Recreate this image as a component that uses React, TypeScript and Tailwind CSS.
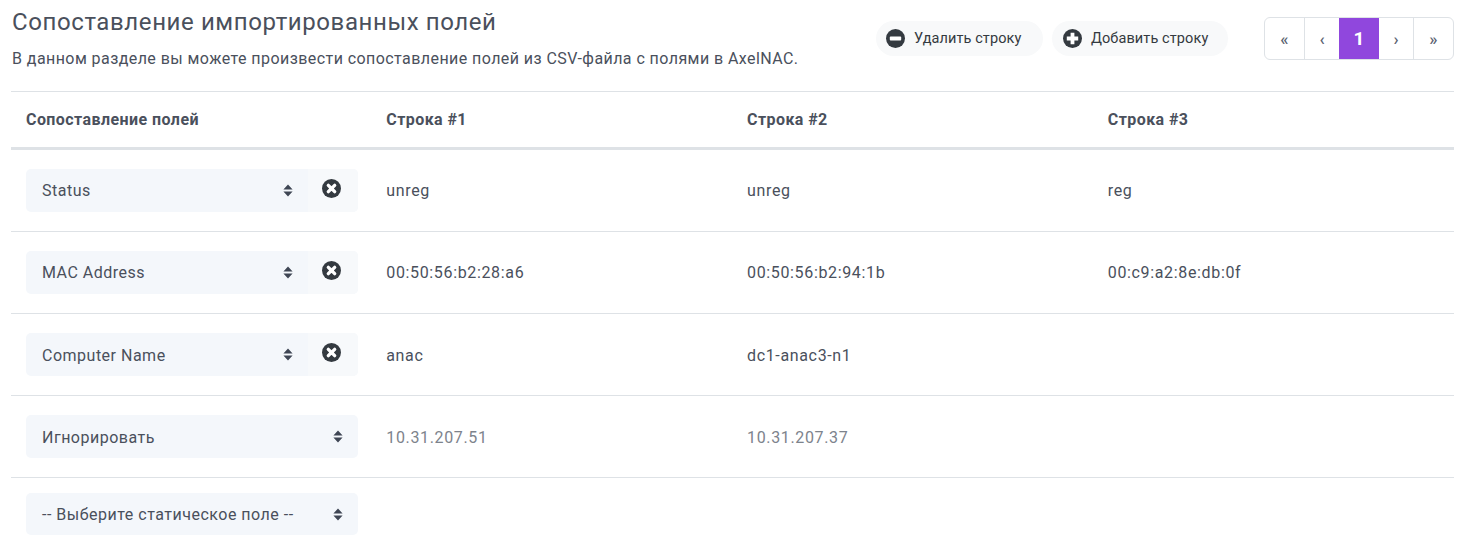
import { Fragment } from 'react';

const rows = [
  { field: 'Status', removable: true, cells: ['unreg', 'unreg', 'reg'] },
  { field: 'MAC Address', removable: true, cells: ['00:50:56:b2:28:a6', '00:50:56:b2:94:1b', '00:c9:a2:8e:db:0f'] },
  { field: 'Computer Name', removable: true, low: true, cells: ['anac', 'dc1-anac3-n1', ''] },
  { field: 'Игнорировать', removable: false, muted: true, low: true, cells: ['10.31.207.51', '10.31.207.37', ''] },
];

function Sort() {
  return (
    <svg width="10" height="13" viewBox="0 0 10 13" className="shrink-0 text-[#3f4654]">
      <path d="M5 0.5 9.6 5.4H0.4Z M5 12.5 0.4 7.6H9.6Z" fill="currentColor" />
    </svg>
  );
}

function RoundIcon({ type, size = 19 }: { type: 'minus' | 'plus' | 'times'; size?: number }) {
  return (
    <svg width={size} height={size} viewBox="0 0 18 18" className="-mt-px shrink-0">
      <circle cx="9" cy="9" r="9" fill="#343a40" />
      {type === 'minus' && <rect x="3.6" y="7.2" width="10.8" height="3.6" rx="0.8" fill="#fff" />}
      {type === 'plus' && <path d="M7.2 3.6h3.6v3.6h3.6v3.6h-3.6v3.6H7.2v-3.6H3.6V7.2h3.6Z" fill="#fff" />}
      {type === 'times' && <path d="M6 6l6 6M12 6l-6 6" stroke="#fff" strokeWidth="3.2" strokeLinecap="round" />}
    </svg>
  );
}

function FieldSelect({ label, removable, low, h = 'h-[43px]' }: { label: string; removable?: boolean; low?: boolean; h?: string }) {
  return (
    <div className={`flex w-[332px] shrink-0 overflow-hidden rounded-[5px] bg-[#f4f7fb] ${h}`}>
      <div className="flex flex-1 items-center justify-between pl-4 pr-[15px] text-[16px] tracking-[0.5px] text-[#4a505c]">
        <span className={low ? 'pt-[2px]' : ''}>{label}</span>
        <Sort />
      </div>
      {removable && (
        <div className="flex w-[50px] items-start justify-center bg-[#f7f9fb] pr-[3px] pt-[11px]">
          <RoundIcon type="times" />
        </div>
      )}
    </div>
  );
}

export default function App() {
  return (
    <div className="h-[555px] overflow-hidden bg-white pl-[11px] pr-[10px] font-['Roboto',sans-serif] text-[#4a505c]">
      <div className="flex h-[91px] items-start justify-between">
        <div className="pl-px pt-[7px]">
          <h1 className="text-[24px] leading-[30px] tracking-[0.6px] text-[#4a505c]">Сопоставление импортированных полей</h1>
          <p className="mt-[10px] text-[16px] leading-[24px] tracking-[0.43px] text-[#4a505c]">
            В данном разделе вы можете произвести сопоставление полей из CSV-файла с полями в AxelNAC.
          </p>
        </div>
        <div className="flex items-start">
          <div className="mt-[21px] flex gap-[9px] text-[14.5px] tracking-[0.1px] text-[#343a40]">
            <button className="flex h-[35px] w-[167px] items-center gap-[9px] rounded-full bg-[#f8f9fa] pl-[10px]">
              <RoundIcon type="minus" /> Удалить строку
            </button>
            <button className="flex h-[35px] w-[176px] items-center gap-[9px] rounded-full bg-[#f8f9fa] pl-[11px]">
              <RoundIcon type="plus" /> Добавить строку
            </button>
          </div>
          <div className="ml-9 mt-[17px] flex h-[43px] w-[190px] overflow-hidden rounded-[6px] border border-[#dee2e6] text-[17px] font-medium text-[#5a6270]">
            <div className="flex w-[40px] items-center justify-center border-r border-[#dee2e6] pt-[2px]">«</div>
            <div className="flex w-[34px] items-center justify-center pt-[2px]">‹</div>
            <div className="flex w-[40px] items-center justify-center bg-[#9047dd] pt-px text-[19px] font-bold text-white">1</div>
            <div className="flex w-[35px] items-center justify-center border-r border-[#dee2e6] pt-[2px]">›</div>
            <div className="flex flex-1 items-center justify-center pt-[2px]">»</div>
          </div>
        </div>
      </div>

      <div className="grid grid-cols-4 border-t border-[#dee2e6]">
        <div className="col-span-4 grid h-[58px] grid-cols-4 items-center border-b-[3px] border-[#dee2e6] text-[16px] font-bold tracking-[0.43px] text-[#4a505c]">
          {['Сопоставление полей', 'Строка #1', 'Строка #2', 'Строка #3'].map((title, i) => (
            <div key={title} className={i === 0 ? 'px-[15px]' : 'px-[14.5px]'}>{title}</div>
          ))}
        </div>
        {rows.map((row) => (
          <Fragment key={row.field}>
            <div className="flex h-[82px] items-center border-b border-[#dee2e6] px-[15px]">
              <FieldSelect label={row.field} removable={row.removable} low={row.low} />
            </div>
            {row.cells.map((cell, i) => (
              <div
                key={i}
                className={`flex h-[82px] items-center border-b border-[#dee2e6] px-[14.5px] text-[16px] tracking-[0.65px] ${row.low ? 'pt-[2px]' : ''} ${row.muted ? 'text-[#7d838c]' : 'text-[#4a505c]'}`}
              >
                {cell}
              </div>
            ))}
          </Fragment>
        ))}
        <div className="col-span-4 px-[15px] pt-[15px]">
          <FieldSelect label="-- Выберите статическое поле --" h="h-[42px]" low />
        </div>
      </div>
    </div>
  );
}
